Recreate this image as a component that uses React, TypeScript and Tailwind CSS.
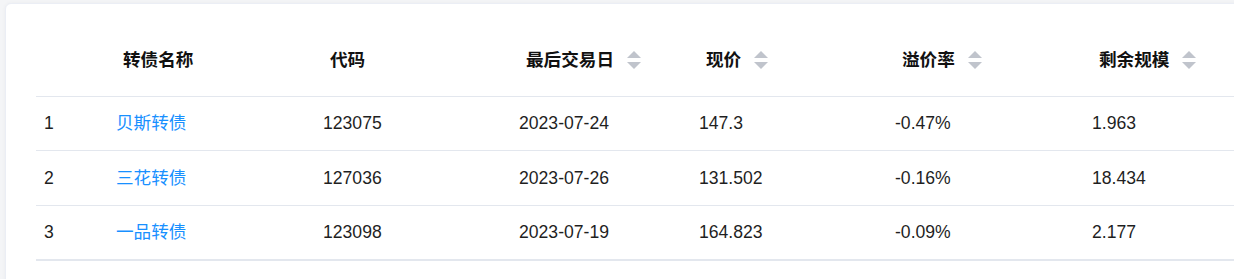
const rows = [
  { name: "贝斯转债", code: "123075", date: "2023-07-24", price: "147.3", premium: "-0.47%", left: "1.963", h: "h-[54px] border-b" },
  { name: "三花转债", code: "127036", date: "2023-07-26", price: "131.502", premium: "-0.16%", left: "18.434", h: "h-[55px] border-b" },
  { name: "一品转债", code: "123098", date: "2023-07-19", price: "164.823", premium: "-0.09%", left: "2.177", h: "h-[55px] border-b-2" },
]

const SortIcon = () => (
  <svg width="14" height="19" viewBox="0 0 14 19" className="ml-[13px] shrink-0">
    <path d="M7 0 L14 7 L0 7 Z" fill="#c0c4cc" />
    <path d="M0 11 L14 11 L7 18 Z" fill="#c0c4cc" />
  </svg>
)

const cols = ["w-[72px]", "w-[207px]", "w-[196px]", "w-[180px]", "w-[196px]", "w-[197px]", "w-[160px]"]

const Head = ({ label, sort, w }: { label: string; sort?: boolean; w: string }) => (
  <div className={`${w} shrink-0 flex items-center pl-[15px] font-bold text-[#111]`}>
    <span>{label}</span>
    {sort && <SortIcon />}
  </div>
)

export default function App() {
  return (
    <div
      className="h-[279px] w-[1234px] overflow-hidden bg-[#f4f5f7] pl-[5px] pt-[3px]"
      style={{ fontFamily: '"Liberation Sans", "Noto Sans CJK SC", sans-serif' }}
    >
      <div className="h-[300px] w-[1260px] rounded-md border border-[#ebeef5] bg-white pl-[30px] pt-[20px] shadow-[0_0_4px_rgba(0,0,0,0.04)]">
        <div className="w-[1220px] text-[17.6px]">
          <div className="flex h-[73px] border-b border-[#e3e7ee]">
            <Head label="" w={cols[0]} />
            <Head label="转债名称" w={cols[1]} />
            <Head label="代码" w={cols[2]} />
            <Head label="最后交易日" sort w={cols[3]} />
            <Head label="现价" sort w={cols[4]} />
            <Head label="溢价率" sort w={cols[5]} />
            <Head label="剩余规模" sort w={cols[6]} />
          </div>
          {rows.map((r, i) => (
            <div key={r.code} className={`flex items-center border-[#e3e7ee] text-[#1f1f1f] ${r.h}`}>
              <div className={`${cols[0]} shrink-0 pl-2`}>{i + 1}</div>
              <div className={`${cols[1]} shrink-0 pl-2 text-[#1890ff]`}>{r.name}</div>
              <div className={`${cols[2]} shrink-0 pl-2`}>{r.code}</div>
              <div className={`${cols[3]} shrink-0 pl-2`}>{r.date}</div>
              <div className={`${cols[4]} shrink-0 pl-2`}>{r.price}</div>
              <div className={`${cols[5]} shrink-0 pl-2`}>{r.premium}</div>
              <div className={`${cols[6]} shrink-0 pl-2`}>{r.left}</div>
            </div>
          ))}
        </div>
      </div>
    </div>
  )
}
